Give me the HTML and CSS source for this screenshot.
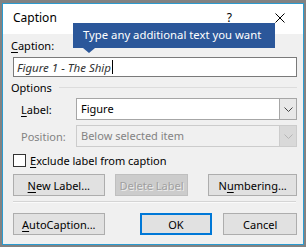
FILE: index.html
```html
<!DOCTYPE html>
<html lang="en">

<head>
  <meta charset="UTF-8">
  <title>Caption</title>
  <link rel="stylesheet" href="styles.css">
</head>

<body>
  <div class="dialog">
    <div class="title-bar">
      <span class="title">Caption</span>
      <span class="help">?</span>
      <svg class="close" width="10" height="10" viewBox="0 0 10 10">
        <path d="M0.5 0.5 L9.5 9.5 M9.5 0.5 L0.5 9.5" stroke="#000" stroke-width="1" fill="none" />
      </svg>
    </div>

    <div class="body">
      <div class="field-label"><u>C</u>aption:</div>
      <div class="caption-input">
        <span class="caption-text">Figure 1 - The Ship</span><span class="caret"></span>
      </div>

      <div class="group-title">
        <span>Options</span>
        <span class="group-line"></span>
      </div>

      <div class="option-row">
        <span class="option-label"><u>L</u>abel:</span>
        <div class="select">
          <span class="select-value">Figure</span>
          <span class="select-arrow">
            <svg width="9" height="5" viewBox="0 0 9 5">
              <path d="M0.5 0.5 L4.5 4.5 L8.5 0.5" stroke="#444" fill="none" />
            </svg>
          </span>
        </div>
      </div>

      <div class="option-row disabled">
        <span class="option-label">Position:</span>
        <div class="select">
          <span class="select-value">Below selected item</span>
          <span class="select-arrow">
            <svg width="9" height="5" viewBox="0 0 9 5">
              <path d="M0.5 0.5 L4.5 4.5 L8.5 0.5" stroke="#b5b5b5" fill="none" />
            </svg>
          </span>
        </div>
      </div>

      <label class="check-row">
        <span class="checkbox"></span>
        <span><u>E</u>xclude label from caption</span>
      </label>

      <div class="button-row">
        <button class="btn btn-new"><u>N</u>ew Label...</button>
        <button class="btn btn-delete" disabled>Delete Label</button>
        <button class="btn btn-numbering">N<u>u</u>mbering...</button>
      </div>

      <div class="separator"></div>

      <div class="button-row footer">
        <button class="btn btn-auto"><u>A</u>utoCaption...</button>
        <button class="btn btn-ok">OK</button>
        <button class="btn btn-cancel">Cancel</button>
      </div>
    </div>

    <div class="tooltip">Type any additional text you want</div>
  </div>
</body>

</html>
```

FILE: styles.css
```css
body {
  margin: 0;
  padding: 3px 2px 2px 2px;
  background-color: #828282;
  font-family: "Noto Sans", "Open Sans", sans-serif;
  font-size: 11px;
  color: #000;
}

.dialog {
  position: relative;
  width: 300px;
  height: 240px;
  border: 1px solid #2b9bd0;
  background-color: #f0f0f0;
}

.title-bar {
  display: flex;
  align-items: center;
  height: 30px;
  background-color: #fff;
  padding-left: 10px;
}

.title {
  flex: 1;
  font-size: 12px;
  margin-top: -3px;
}

.help {
  font-size: 12px;
  margin-right: 43px;
  margin-top: -3px;
}

.close {
  margin-right: 18px;
  margin-top: -2px;
}

.body {
  padding: 4px 6px 0 8px;
}

u {
  text-decoration-thickness: 1px;
  text-underline-offset: 2px;
}

.field-label {
  height: 16px;
  line-height: 16px;
}

.caption-input {
  display: flex;
  align-items: center;
  height: 18px;
  margin: 3px 0 0 2px;
  border: 1px solid #7a7a7a;
  background-color: #fff;
  padding-left: 3px;
}

.caption-text {
  font-style: italic;
  font-size: 11.5px;
  color: #333;
}

.caret {
  width: 1px;
  height: 14px;
  margin-left: 1px;
  background-color: #000;
}

.group-title {
  display: flex;
  align-items: center;
  height: 16px;
  margin-top: 2px;
}

.group-line {
  flex: 1;
  height: 1px;
  margin-left: 7px;
  background-color: #dcdcdc;
}

.option-row {
  display: flex;
  align-items: center;
  height: 22px;
  margin-top: 3px;
}

.option-row + .option-row {
  margin-top: 5px;
}

.option-label {
  width: 55px;
  padding-left: 10px;
}

.select {
  flex: 1;
  display: flex;
  height: 20px;
  border: 1px solid #a6a6a6;
  background-color: #fff;
}

.select-value {
  flex: 1;
  padding-left: 4px;
  line-height: 20px;
}

.select-arrow {
  display: flex;
  align-items: center;
  justify-content: center;
  width: 16px;
  border-left: 1px solid #a6a6a6;
  background-color: #e8e8e8;
}

.disabled .option-label,
.disabled .select-value {
  color: #838383;
}

.disabled .select {
  border-color: #cccccc;
  background-color: #f0f0f0;
}

.disabled .select-arrow {
  border-left-color: #cccccc;
  background-color: #d9d9d9;
}

.check-row {
  display: flex;
  align-items: center;
  gap: 4px;
  height: 16px;
  margin-top: 5px;
  padding-left: 2px;
}

.checkbox {
  width: 11px;
  height: 11px;
  border: 1px solid #333;
  background-color: #fff;
}

.button-row {
  display: flex;
  margin-top: 6px;
  padding-left: 2px;
}

.btn {
  height: 22px;
  padding: 0;
  border: 1px solid #adadad;
  background-color: #e1e1e1;
  font-family: inherit;
  font-size: 11px;
  color: #000;
}

.btn-new,
.btn-auto {
  width: 92px;
}

.btn-delete {
  width: 74px;
  margin-left: 10px;
  border-color: #bfbfbf;
  background-color: #cccccc;
  color: #a0a0a0;
  text-shadow: 1px 1px 0 #ececec;
}

.btn-numbering {
  width: 89px;
  margin-left: 20px;
}

.separator {
  height: 1px;
  margin: 5px 1px 0 2px;
  background-color: #d5d5d5;
  box-shadow: 0 1px 0 #fafafa;
}

.footer {
  margin-top: 11px;
}

.btn-ok {
  width: 73px;
  margin-left: 35px;
  border: 2px solid #0078d7;
}

.btn-cancel {
  width: 74px;
  margin-left: 11px;
}

.tooltip {
  position: absolute;
  left: 70px;
  top: 19px;
  width: 192px;
  height: 25px;
  padding-left: 10px;
  background-color: #2b579a;
  color: #fff;
  font-size: 11.3px;
  line-height: 24px;
  white-space: nowrap;
}

.tooltip::after {
  content: "";
  position: absolute;
  left: 10px;
  top: 25px;
  border-left: 6px solid transparent;
  border-right: 6px solid transparent;
  border-top: 5px solid #2b579a;
}
```
